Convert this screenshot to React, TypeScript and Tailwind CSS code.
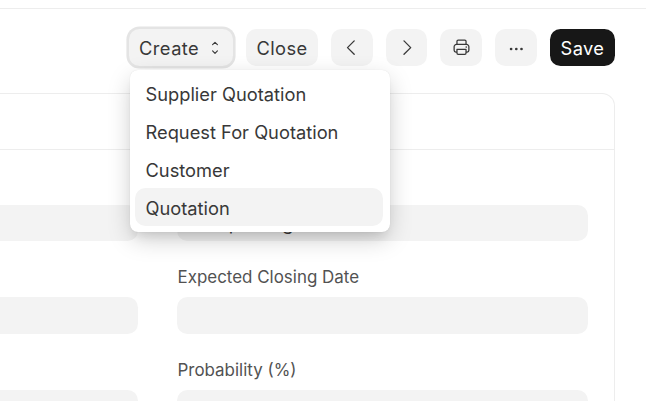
import type { ReactNode } from "react";

const menuItems = ["Supplier Quotation", "Request For Quotation", "Customer", "Quotation"];

function IconButton({ label, className, children }: { label: string; className: string; children: ReactNode }) {
  return (
    <button aria-label={label} className={`flex h-[37px] items-center justify-center rounded-[10.5px] bg-[#f3f3f3] ${className}`}>
      {children}
    </button>
  );
}

function Toolbar() {
  return (
    <header className="flex h-[85px] items-start border-t border-[#ededed] pt-5 pl-[129px] text-[18.3px] tracking-[0.02em] text-[#383838]">
      <div className="relative">
        <button className="flex h-[37px] w-[104px] items-center rounded-[10.5px] bg-[#f3f3f3] pl-[10px] shadow-[0_0_0_2.6px_#e4e4e4]">
          <span className="pt-px tracking-[0.025em]">Create</span>
          <svg className="ml-[11.5px] h-3.5 w-2" viewBox="0 0 8 14" fill="none" stroke="#383838" strokeWidth="1.15" strokeLinecap="round" strokeLinejoin="round">
            <path d="M1.6 3.7 4 1.3l2.4 2.4M1.6 9.9 4 12.3l2.4-2.4" />
          </svg>
        </button>
        <ul className="absolute top-[41px] left-[0.5px] z-10 w-[260px] rounded-[8px] bg-white pt-[4px] pr-[6.5px] pb-[6px] pl-[5.5px] tracking-normal shadow-[0_0_1px_rgba(0,0,0,0.12),0_8px_10px_-4px_rgba(0,0,0,0.08),0_8px_24px_-2px_rgba(0,0,0,0.22)]">
          {menuItems.map((item) => (
            <li
              key={item}
              className={`flex h-[38px] items-center rounded-[10.5px] pl-[10.5px] whitespace-nowrap ${item === "Quotation" ? "bg-[#f3f3f3]" : ""}`}
            >
              <span className="pt-px">{item}</span>
            </li>
          ))}
        </ul>
      </div>
      <button className="ml-[13px] flex h-[37px] w-[72px] items-center justify-center rounded-[10.5px] bg-[#f3f3f3] pt-px">Close</button>
      <IconButton label="Previous" className="ml-[13px] w-[42px]">
        <svg className="-ml-1 h-4 w-4" viewBox="0 0 16 16" fill="none" stroke="#383838" strokeWidth="1.3" strokeLinecap="round" strokeLinejoin="round">
          <path d="M12.2 .9 5.5 7.6l6.7 6.7" />
        </svg>
      </IconButton>
      <IconButton label="Next" className="ml-[13px] w-[41px]">
        <svg className="h-4 w-4" viewBox="0 0 16 16" fill="none" stroke="#383838" strokeWidth="1.3" strokeLinecap="round" strokeLinejoin="round">
          <path d="m5 .9 6.7 6.7L5 14.3" />
        </svg>
      </IconButton>
      <IconButton label="Print" className="ml-[13px] w-[42px]">
        <svg className="-mt-px ml-px h-[17px] w-[17px]" viewBox="0 0 18 18" fill="none" stroke="#383838" strokeWidth="1.35" strokeLinejoin="round">
          <path d="M4.2 5.8V2.5a1.3 1.3 0 0 1 1.3-1.3h7a1.3 1.3 0 0 1 1.3 1.3v3.3" />
          <path d="M4.2 13.8H3a1.8 1.8 0 0 1-1.8-1.8V8.3A2.5 2.5 0 0 1 3.7 5.8h10.6a2.5 2.5 0 0 1 2.5 2.5V12a1.8 1.8 0 0 1-1.8 1.8h-1.2" />
          <path d="M4.2 11.1h9.6v3.8a1.3 1.3 0 0 1-1.3 1.3h-7a1.3 1.3 0 0 1-1.3-1.3z" />
          <circle cx="14" cy="8.6" r="0.8" fill="#383838" stroke="none" />
        </svg>
      </IconButton>
      <IconButton label="More" className="ml-[13px] w-[42px]">
        <svg className="mt-0.5 h-4 w-4" viewBox="0 0 16 16" fill="#383838">
          <circle cx="3.1" cy="8" r="1.35" />
          <circle cx="8.3" cy="8" r="1.35" />
          <circle cx="13.5" cy="8" r="1.35" />
        </svg>
      </IconButton>
      <button className="ml-[13px] flex h-[37px] w-[65px] items-center justify-center rounded-[10.5px] bg-[#171717] pt-px text-white">Save</button>
    </header>
  );
}

function Field({ label, value, cut }: { label?: string; value?: string; cut?: boolean }) {
  return (
    <div className="h-[92.4px]">
      <div className="flex h-[36px] items-start pt-[4px] pl-[0.5px] text-[#525252]">{label}</div>
      <div
        className={`flex h-[36.4px] items-center bg-[#f3f3f3] pt-px pl-[13px] text-[18.3px] text-[#383838] ${cut ? "rounded-r-[10.5px]" : "rounded-[10.5px]"}`}
      >
        {value}
      </div>
    </div>
  );
}

export default function App() {
  return (
    <div className="h-[401px] w-[646px] overflow-hidden bg-white pt-2 font-['Inter',sans-serif] leading-6">
      <Toolbar />
      <main className="h-[340px] w-[615px] rounded-tr-[13px] border-t border-r border-[#ededed]">
        <div className="h-[56px] border-b border-[#ededed]" />
        <div className="grid grid-cols-[138px_411px] gap-x-[39px] pt-[18.8px] text-[16.95px]">
          <div>
            <Field cut />
            <Field cut />
            <Field cut />
          </div>
          <div>
            <Field value="Prospecting" />
            <Field label="Expected Closing Date" />
            <Field label="Probability (%)" />
          </div>
        </div>
      </main>
    </div>
  );
}
